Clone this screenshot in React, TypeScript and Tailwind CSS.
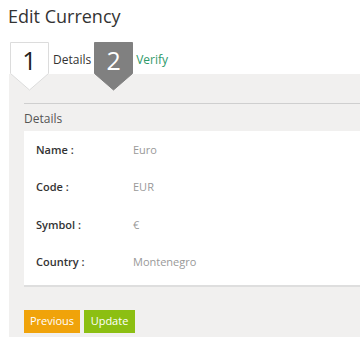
import React from 'react';

const rows = [
  { label: 'Name :', value: 'Euro' },
  { label: 'Code :', value: 'EUR' },
  { label: 'Symbol :', value: '€' },
  { label: 'Country :', value: 'Montenegro' },
];

const StepBadge: React.FC<{ num: string; active?: boolean }> = ({ num, active }) => (
  <div className="relative w-[39px] h-[49px]">
    <svg width="39" height="49" viewBox="0 0 39 49" className="absolute inset-0">
      <polygon
        points="0.5,0.5 38.5,0.5 38.5,31.5 19.5,48 0.5,31.5"
        fill={active ? '#ffffff' : '#808080'}
        stroke={active ? '#dcdcdc' : '#808080'}
      />
    </svg>
    <span
      className={`relative block text-center pt-[3px] text-[25px] leading-[30px] ${active ? 'text-[#222]' : 'text-white'}`}
    >
      {num}
    </span>
  </div>
);

const App: React.FC = () => {
  return (
    <div className="w-[360px] h-[337px] overflow-hidden bg-white font-['Open_Sans',sans-serif] text-[#333]">
      <h1 className="pl-[8px] pt-[3px] text-[18px] leading-[26px] text-[#333]">Edit Currency</h1>

      {/* steps */}
      <div className="relative z-10 flex items-start pl-[10px] mt-[13px] -mb-[17px]">
        <StepBadge num="1" active />
        <span className="ml-[4px] mt-[9px] text-[12px] text-[#333]">Details</span>
        <div className="ml-[3px]">
          <StepBadge num="2" />
        </div>
        <span className="ml-[3px] mt-[9px] text-[12px] text-[#2e9a6a]">Verify</span>
      </div>

      <div className="ml-[9px] bg-[#f1f0ef] h-[300px] pl-[15px] pt-[29px]">
        <div className="border-t border-[#cfcfcf]" />
        <div className="pt-[6px] pb-[3px] text-[12px] leading-[18px] text-[#555]">Details</div>
        <div className="bg-white border-b-2 border-[#dedede] pb-[4px]">
          {rows.map((r) => (
            <div key={r.label} className="flex items-center h-[37.5px] text-[11px]">
              <div className="w-[109px] pl-[12px] font-semibold text-[#333]">{r.label}</div>
              <div className="text-[#999]">{r.value}</div>
            </div>
          ))}
        </div>
        <div className="flex gap-[4px] mt-[23px]">
          <button className="w-[56px] h-[23px] bg-[#f0a30a] text-white text-[11px]">Previous</button>
          <button className="w-[51px] h-[23px] bg-[#8cbf12] text-white text-[11px]">Update</button>
        </div>
      </div>
    </div>
  );
};

export default App;
